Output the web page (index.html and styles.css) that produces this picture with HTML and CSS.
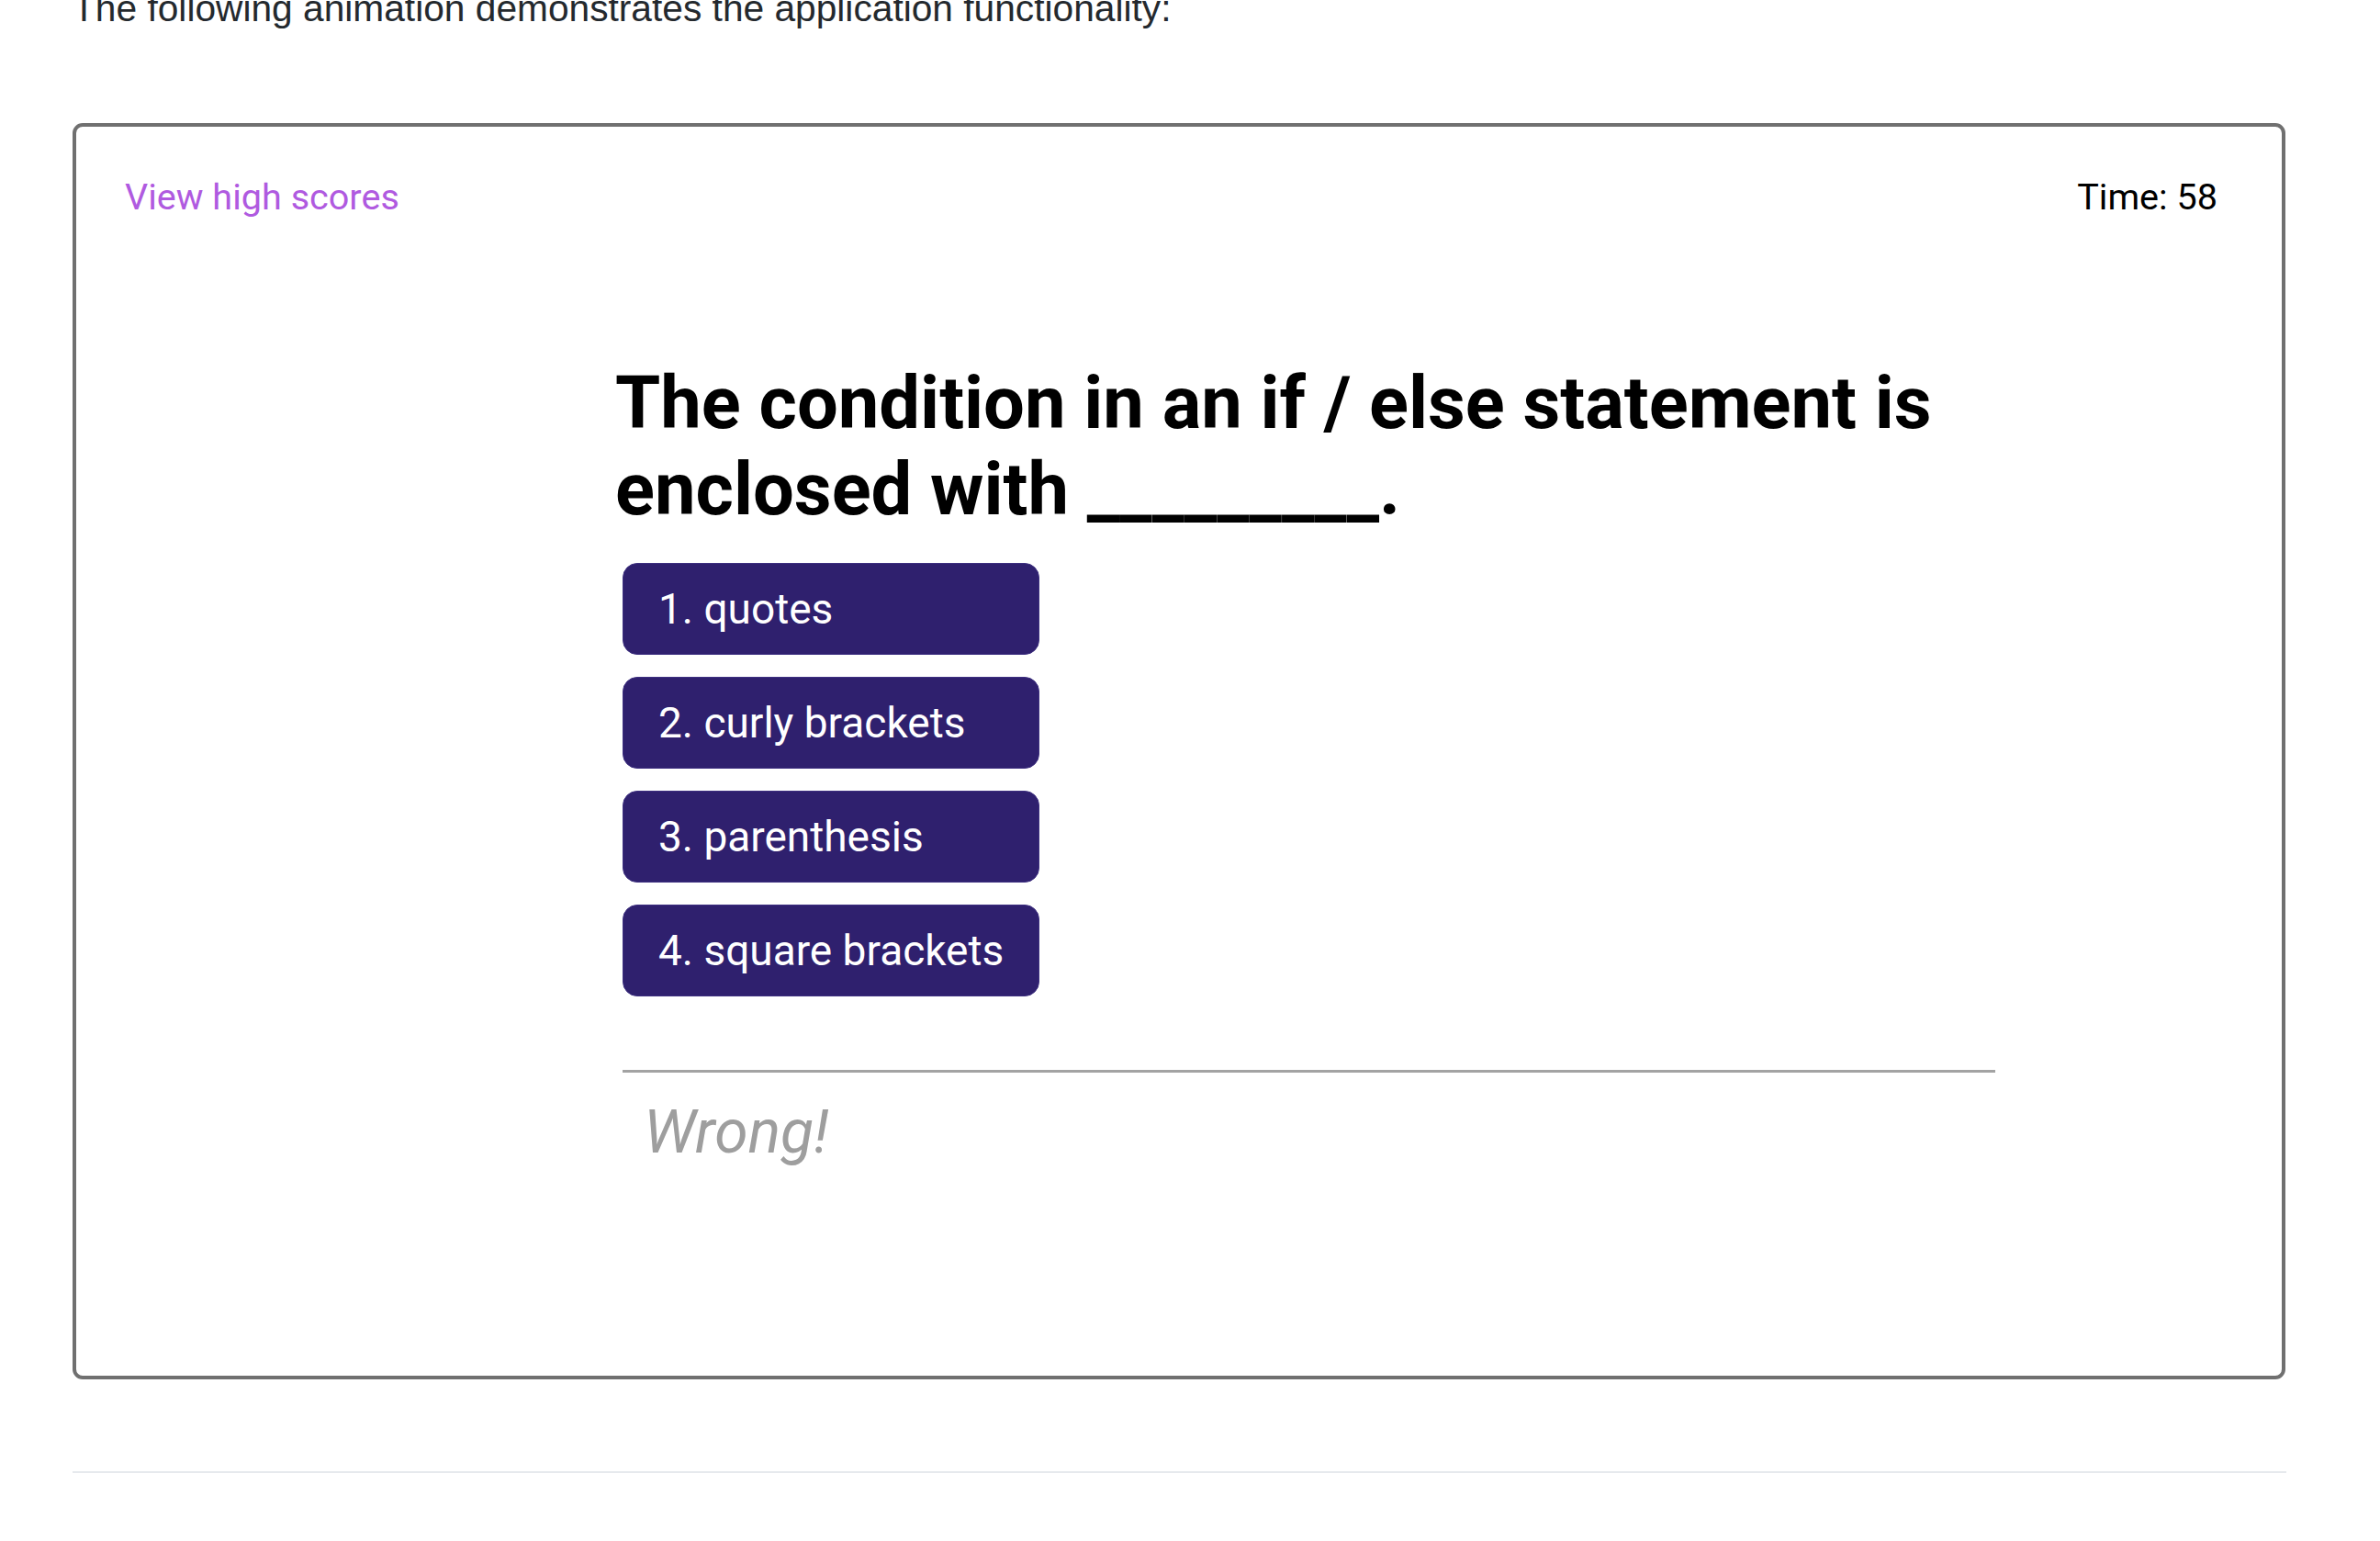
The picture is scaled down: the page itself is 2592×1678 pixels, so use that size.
FILE: index.html
```html
<!DOCTYPE html>
<html lang="en">
<head>
<meta charset="utf-8">
<title>Code Quiz</title>
<link rel="stylesheet" href="styles.css">
</head>
<body>
<div class="page">
  <p class="intro">The following animation demonstrates the application functionality:</p>
  <div class="frame">
    <header class="quiz-header">
      <a class="scores-link" href="#">View high scores</a>
      <span class="timer">Time: 58</span>
    </header>
    <main class="quiz">
      <h1 class="question">The condition in an if / else statement is enclosed with _________.</h1>
      <div class="choices">
        <button class="choice">1. quotes</button>
        <button class="choice">2. curly brackets</button>
        <button class="choice">3. parenthesis</button>
        <button class="choice">4. square brackets</button>
      </div>
      <div class="divider"></div>
      <p class="feedback">Wrong!</p>
    </main>
  </div>
  <div class="page-rule"></div>
</div>
</body>
</html>
```
FILE: styles.css
```css
html, body {
  margin: 0;
  padding: 0;
  background: #ffffff;
}

.page {
  padding-left: 79px;
  width: 2410px;
}

.intro {
  margin: -21px 0 95px 0;
  font-family: "Liberation Sans", Arial, sans-serif;
  font-size: 40.7px;
  line-height: 60px;
  color: #24292e;
  white-space: nowrap;
}

.frame {
  box-sizing: border-box;
  width: 2410px;
  height: 1368px;
  border: 4px solid #707070;
  border-radius: 11px;
  font-family: Roboto, "Noto Sans", sans-serif;
  overflow: hidden;
}

.quiz-header {
  display: flex;
  justify-content: space-between;
  align-items: baseline;
  padding: 53px 70px 0 53px;
  font-size: 39.6px;
  line-height: normal;
}

.scores-link {
  color: #b05ae0;
  text-decoration: none;
}

.timer {
  color: #000000;
}

.quiz {
  margin-left: 587px;
  width: 1503px;
  display: flex;
  flex-direction: column;
  align-items: flex-start;
}

.question {
  margin: 154px 0 33px 0;
  font-size: 79.5px;
  font-weight: 700;
  line-height: 94px;
  color: #000000;
  width: 1500px;
}

.choices {
  display: inline-flex;
  flex-direction: column;
  gap: 24px;
  margin-left: 8px;
}

.choice {
  box-sizing: border-box;
  height: 100px;
  padding: 0 38px;
  border: 1px solid #3d2f80;
  border-radius: 16px;
  background: #2f206e;
  color: #ffffff;
  font-family: Roboto, "Noto Sans", sans-serif;
  font-size: 46px;
  line-height: 54px;
  text-align: left;
  white-space: nowrap;
}

.divider {
  margin: 80px 0 0 8px;
  width: 1495px;
  height: 3px;
  background: #a3a3a3;
}

.feedback {
  margin: 26px 0 0 31px;
  font-size: 66px;
  font-style: italic;
  line-height: normal;
  color: #9e9e9e;
}

.page-rule {
  margin-top: 100px;
  width: 2411px;
  height: 2px;
  background: #e6e9ed;
}
```
